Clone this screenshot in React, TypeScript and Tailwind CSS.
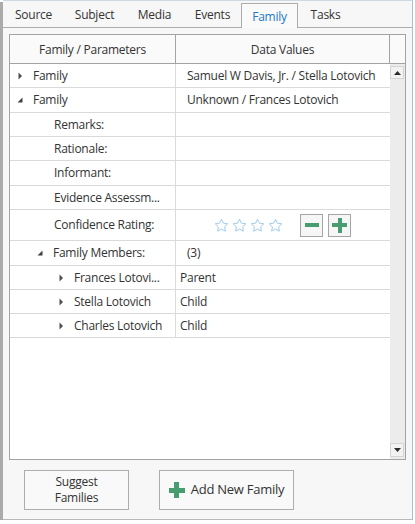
import React from "react";

type Row = {
  h: string;
  label: string;
  pad: string;
  toggle?: "open" | "closed";
  value?: string;
  valuePad?: string;
  rating?: boolean;
};

const rows: Row[] = [
  { h: "h-[24px]", label: "Family", pad: "pl-[7px]", toggle: "closed", value: "Samuel W Davis, Jr. / Stella Lotovich", valuePad: "pl-[11px]" },
  { h: "h-[25px]", label: "Family", pad: "pl-[7px]", toggle: "open", value: "Unknown / Frances Lotovich", valuePad: "pl-[11px]" },
  { h: "h-[24px]", label: "Remarks:", pad: "pl-[44px]" },
  { h: "h-[24px]", label: "Rationale:", pad: "pl-[44px]" },
  { h: "h-[25px]", label: "Informant:", pad: "pl-[44px]" },
  { h: "h-[24px]", label: "Evidence Assessm...", pad: "pl-[44px]" },
  { h: "h-[31px]", label: "Confidence Rating:", pad: "pl-[44px]", rating: true },
  { h: "h-[25px]", label: "Family Members:", pad: "pl-[27px]", toggle: "open", value: "(3)", valuePad: "pl-[11px]" },
  { h: "h-[24px]", label: "Frances Lotovi...", pad: "pl-[48px]", toggle: "closed", value: "Parent", valuePad: "pl-[4px]" },
  { h: "h-[24px]", label: "Stella Lotovich", pad: "pl-[48px]", toggle: "closed", value: "Child", valuePad: "pl-[4px]" },
  { h: "h-[24px]", label: "Charles Lotovich", pad: "pl-[48px]", toggle: "closed", value: "Child", valuePad: "pl-[4px]" },
];

const tabs = [
  { name: "Source", w: "w-[61px]" },
  { name: "Subject", w: "w-[61px]" },
  { name: "Media", w: "w-[59px]" },
  { name: "Events", w: "w-[57px]" },
  { name: "Family", w: "w-[57px]", active: true },
  { name: "Tasks", w: "w-[55px]" },
];

function Toggle({ open }: { open: boolean }) {
  return (
    <svg width="16" height="8" viewBox="0 0 16 8" className="shrink-0">
      {open ? (
        <polygon points="5.5,1.5 5.5,6.5 0.5,6.5" fill="#404040" />
      ) : (
        <polygon points="1.5,0.5 5,4 1.5,7.5" fill="#4d4d4d" />
      )}
    </svg>
  );
}

function Star() {
  return (
    <svg width="15" height="15" viewBox="0 0 24 24" fill="none" stroke="#9fcbee" strokeWidth="1.6" strokeLinejoin="round">
      <path d="M12 2l3.09 6.26L22 9.27l-5 4.87 1.18 6.88L12 17.77l-6.18 3.25L7 14.14 2 9.27l6.91-1.01L12 2z" />
    </svg>
  );
}

function Rating() {
  return (
    <div className="flex items-center pl-[38px]">
      <div className="flex gap-[3px]">
        <Star />
        <Star />
        <Star />
        <Star />
      </div>
      <div className="ml-[17px] flex gap-[5px]">
        <button className="flex h-[23px] w-[23px] items-center justify-center border border-[#a5a5a5] bg-[#f6f6f6]">
          <span className="h-[4px] w-[14px] bg-[#479c70]" />
        </button>
        <button className="flex h-[23px] w-[23px] items-center justify-center border border-[#a5a5a5] bg-[#f6f6f6]">
          <span className="relative h-[15px] w-[15px]">
            <span className="absolute left-0 right-0 top-[5.5px] h-[4px] bg-[#479c70]" />
            <span className="absolute top-0 bottom-0 left-[5.5px] w-[4px] bg-[#479c70]" />
          </span>
        </button>
      </div>
    </div>
  );
}

export default function App() {
  return (
    <div className="h-[524px] w-[415px] overflow-hidden bg-white font-['Open_Sans',sans-serif] text-[12px] tracking-[-0.25px] text-[#333]">
      <div className="flex h-[520px] w-[413px]">
        <div className="mt-[2px] w-[3px] bg-[#ababab]" />
        <div className="flex flex-1 flex-col border-t border-r border-b border-t-[#cfd9e6] border-r-[#a9c0dc] border-b-[#b8b8b8] bg-[#f7f7f7]">
          {/* tabs */}
          <div className="flex h-[27px] items-end border-b border-[#acacac]">
            {tabs.map((t) =>
              t.active ? (
                <div
                  key={t.name}
                  className={`${t.w} relative z-10 -mb-px flex h-[25px] items-center justify-center border border-b-0 border-[#acacac] bg-[#fafafa] pt-[1px] text-[#1b78c8]`}
                >
                  {t.name}
                </div>
              ) : (
                <div key={t.name} className={`${t.w} flex h-[24px] items-center justify-center`}>
                  {t.name}
                </div>
              )
            )}
          </div>

          {/* grid */}
          <div className="mt-[6px] ml-[6px] flex h-[426px] w-[397px] flex-col border border-[#a3a3a3] bg-white">
            <div className="flex h-[29px] border-b border-[#a3a3a3] bg-[#fafafa]">
              <div className="flex w-[166px] items-center justify-center border-r border-[#a3a3a3] pt-[1px]">Family / Parameters</div>
              <div className="flex w-[214px] items-center justify-center border-r border-[#a3a3a3] pt-[1px]">Data Values</div>
              <div className="flex-1" />
            </div>
            <div className="flex flex-1">
              <div className="flex w-[380px] flex-col">
                {rows.map((r, i) => (
                  <div key={i} className={`flex ${r.h} border-b border-[#dadada]`}>
                    <div className={`flex w-[166px] items-center border-r border-[#dadada] ${r.pad}`}>
                      {r.toggle && <Toggle open={r.toggle === "open"} />}
                      <span className="truncate">{r.label}</span>
                    </div>
                    <div className={`flex flex-1 items-center ${r.valuePad ?? ""}`}>
                      {r.rating ? <Rating /> : r.value}
                    </div>
                  </div>
                ))}
              </div>
              {/* scrollbar */}
              <div className="flex w-[15px] flex-col justify-between bg-[#ececec] py-[2px]">
                <div className="flex h-[13px] w-[14px] items-center justify-center border border-[#d4d4d4] bg-[#f2f2f2]">
                  <svg width="7" height="4" viewBox="0 0 7 4">
                    <polygon points="0,4 3.5,0 7,4" fill="#2b2b2b" />
                  </svg>
                </div>
                <div className="flex h-[14px] w-[14px] items-center justify-center border border-[#d4d4d4] bg-[#f2f2f2]">
                  <svg width="7" height="4" viewBox="0 0 7 4">
                    <polygon points="0,0 7,0 3.5,4" fill="#2b2b2b" />
                  </svg>
                </div>
              </div>
            </div>
          </div>

          {/* buttons */}
          <div className="mt-[10px] ml-[21px] flex gap-[30px]">
            <button className="flex h-[40px] w-[105px] flex-col items-center justify-center border border-[#adadad] bg-[#f9f9f9] leading-[16px]">
              <span>Suggest</span>
              <span>Families</span>
            </button>
            <button className="flex h-[40px] w-[135px] items-center justify-center gap-[6px] border border-[#adadad] bg-[#f9f9f9] text-[13px]">
              <span className="relative h-[16px] w-[16px]">
                <span className="absolute left-0 right-0 top-[5.5px] h-[5px] bg-[#479c70]" />
                <span className="absolute top-0 bottom-0 left-[5.5px] w-[5px] bg-[#479c70]" />
              </span>
              <span>Add New Family</span>
            </button>
          </div>
        </div>
      </div>
    </div>
  );
}
